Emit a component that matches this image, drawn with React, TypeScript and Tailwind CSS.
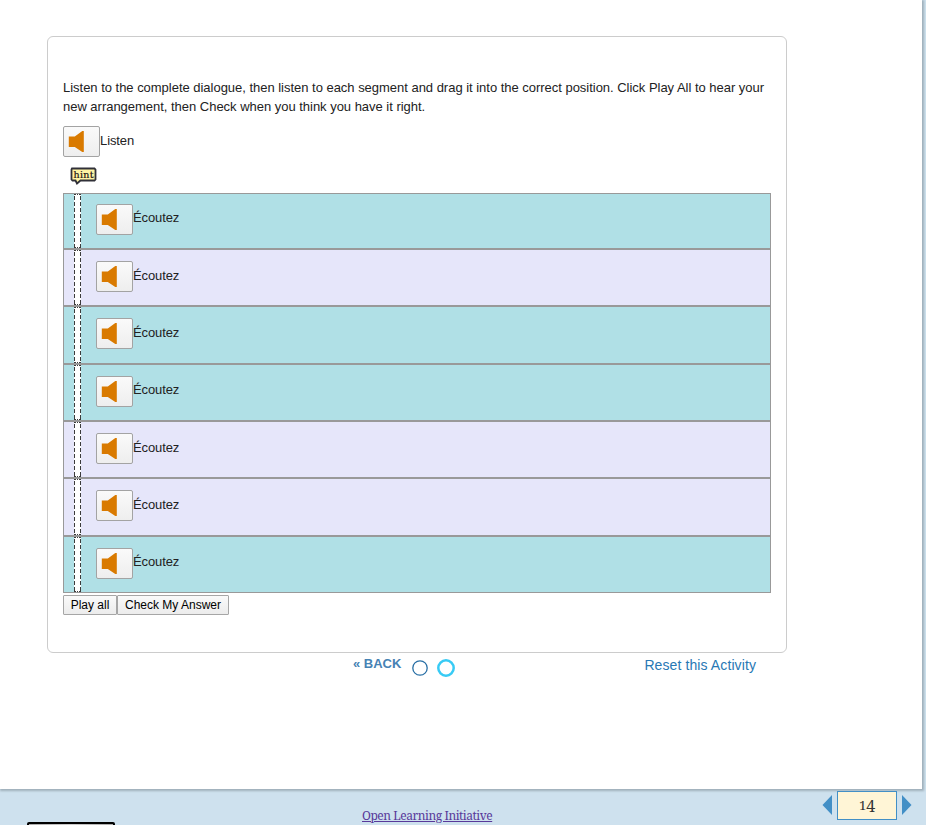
import React from "react";

const SANS = "font-['Liberation_Sans',Arial,sans-serif]";
const SERIF = "font-['Noto_Serif','DejaVu_Serif',Georgia,serif]";

function AudioButton() {
  return (
    <button
      aria-label="Play audio"
      className="block h-[31px] w-[37px] shrink-0 rounded-[2px] border border-[#a3a3a3] bg-linear-to-b from-[#fafafa] to-[#eeeeee]"
    >
      <svg width="35" height="29" viewBox="0 0 35 29" className="block">
        <path d="M4.800 9.500H10.800L18.300 4H19.800V25H18.300L10.800 20H4.800Z" fill="#d97a00" />
      </svg>
    </button>
  );
}

const segments = [
  { h: "h-[56px]", bg: "bg-[#b0e0e6]", pad: "pt-[10px]", textTop: "pt-[6px]" },
  { h: "h-[57px]", bg: "bg-[#e6e6fa]", pad: "pt-[11px]", textTop: "pt-[7px]" },
  { h: "h-[58px]", bg: "bg-[#b0e0e6]", pad: "pt-[11px]", textTop: "pt-[7px]" },
  { h: "h-[57px]", bg: "bg-[#b0e0e6]", pad: "pt-[11px]", textTop: "pt-[6px]" },
  { h: "h-[57px]", bg: "bg-[#e6e6fa]", pad: "pt-[11px]", textTop: "pt-[7px]" },
  { h: "h-[58px]", bg: "bg-[#e6e6fa]", pad: "pt-[11px]", textTop: "pt-[7px]" },
  { h: "h-[57px]", bg: "bg-[#b0e0e6]", pad: "pt-[11px]", textTop: "pt-[6px]" },
];

function Segment({ h, bg, pad, textTop }: (typeof segments)[number]) {
  return (
    <li className={`flex border border-[#999] pl-[10px] ${h} ${bg}`}>
      <svg width="7" height="100%" className="block shrink-0 bg-white">
        <line x1="0.5" y1="2" x2="0.5" y2="100%" stroke="#3c3c3c" strokeDasharray="4 2" />
        <line x1="6.5" y1="2" x2="6.5" y2="100%" stroke="#3c3c3c" strokeDasharray="4 2" />
        <path d="M0 0.500H2M3 0.500H4M5 0.500H7" stroke="#3c3c3c" />
        <line x1="0" y1="100%" x2="7" y2="100%" stroke="#3c3c3c" strokeWidth="2" strokeDasharray="2 1 1 1" />
      </svg>
      <div className={`flex pl-[15px] ${pad}`}>
        <AudioButton />
        <span className={`leading-[16px] tracking-[-0.1px] ${textTop}`}>Écoutez</span>
      </div>
    </li>
  );
}

function HintIcon() {
  return (
    <svg width="28" height="18" viewBox="0 0 28 18" className="block">
      <path
        d="M2 1.500H24.500L25.500 2.500V12.500L24.500 13.500H10.500L7 16.500L5.500 13.500H2.500L1.500 12.500V2.500Z"
        fill="#fff4a3"
        stroke="#303038"
        strokeWidth="1.800"
      />
      <text
        x="3.5"
        y="11"
        textLength="20"
        className="font-['DejaVu_Serif',serif] text-[9.5px]"
        fill="#181010"
        stroke="#181010"
        strokeWidth="0.2"
      >
        hint
      </text>
    </svg>
  );
}

function Arrow({ right = false }: { right?: boolean }) {
  return (
    <svg width="10" height="20" viewBox="0 0 10 20" className="block shrink-0">
      <path d={right ? "M0 0L9.500 10L0 20Z" : "M10 0L0.500 10L10 20Z"} fill="#428fc6" />
    </svg>
  );
}

export default function App() {
  return (
    <div className={`flex h-[825px] w-[926px] flex-col overflow-hidden bg-[#cee1ee] text-[13px] text-[#222] ${SANS}`}>
      <main className="h-[789px] w-[922px] shrink-0 bg-white pt-[36px] pl-[47px] shadow-[1px_1px_2px_1px_#a0b0bb]">
        <section className="h-[617px] w-[740px] rounded-[6px] border border-[#ccc] px-[15px] pt-[41px]">
          <p className="leading-[19px] tracking-[-0.022px] whitespace-nowrap">
            Listen to the complete dialogue, then listen to each segment and drag it into the correct position. Click Play All to hear your
            <br />
            new arrangement, then Check when you think you have it right.
          </p>
          <div className="mt-[10px] flex">
            <AudioButton />
            <span className="pt-[7px] leading-[16px] tracking-[-0.1px]">Listen</span>
          </div>
          <div className="mt-[10px] h-[26px] pl-[7px]">
            <HintIcon />
          </div>
          <ol className="w-[708px]">
            {segments.map((segment, i) => (
              <Segment key={i} {...segment} />
            ))}
          </ol>
          <div className="mt-[2px] flex text-[12px] text-black">
            <button className="h-[20px] w-[54px] rounded-[1px] border border-[#a6a6a6] bg-linear-to-b from-[#fafafa] to-[#ececec] leading-[18px]">
              Play all
            </button>
            <button className="h-[20px] w-[112px] rounded-[1px] border border-[#a6a6a6] bg-linear-to-b from-[#fafafa] to-[#ececec] leading-[18px]">
              Check My Answer
            </button>
          </div>
        </section>
        <nav className="flex h-[32px] w-[740px] pl-[306px] text-[14px]">
          <a className="w-[59px] pt-[3px] text-[13px] leading-[16px] font-bold whitespace-nowrap text-[#4682b4]">« BACK</a>
          <svg width="46" height="26" viewBox="0 0 46 26" className="block shrink-0">
            <circle cx="8" cy="15" r="7.200" fill="white" stroke="#286fa5" strokeWidth="1.300" />
            <circle cx="34" cy="15" r="7.700" fill="white" stroke="#38cbf5" strokeWidth="2.500" />
          </svg>
          <a className="ml-auto pt-[4px] pr-[31px] leading-[16px] tracking-[0.1px] whitespace-nowrap text-[#2878b4]">
            Reset this Activity
          </a>
        </nav>
      </main>
      <footer className="flex h-[36px] shrink-0 items-start">
        <div className="mt-[33px] ml-[27px] h-[22px] w-[88px] shrink-0 rounded-[2px] border-2 border-black bg-linear-to-r from-[#aaa] via-[#ccc] to-[#aaa]" />
        <a className={`mt-[19px] ml-[247px] w-[131px] text-[12px] leading-[16px] tracking-[-0.45px] whitespace-nowrap text-[#58399a] underline ${SERIF}`}>
          Open Learning Initiative
        </a>
        <div className="mt-[2px] ml-auto flex items-start pr-[14px]">
          <div className="pt-[4px]">
            <Arrow />
          </div>
          <div className={`mx-[5px] flex h-[29px] w-[60px] items-start justify-center border border-[#428fc6] bg-[#fff5d6] text-[#333] ${SERIF}`}>
            <span className="pt-[5px] text-[13px] leading-[16px]">1</span>
            <span className="pt-[6px] text-[16px] leading-[16px]">4</span>
          </div>
          <div className="pt-[4px]">
            <Arrow right />
          </div>
        </div>
      </footer>
    </div>
  );
}
